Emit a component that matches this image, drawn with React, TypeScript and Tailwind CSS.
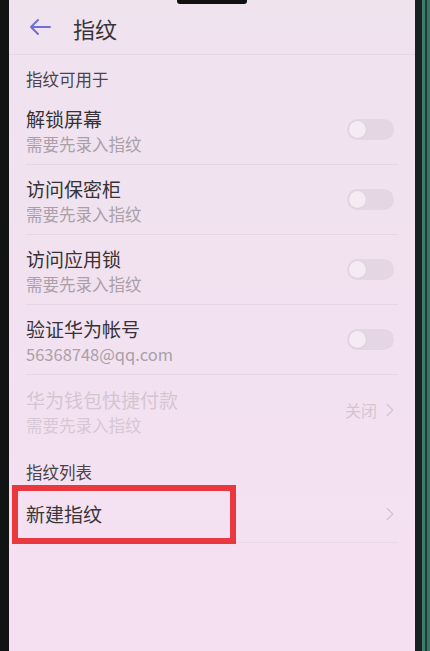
import { ChevronRight } from 'lucide-react';

const font = { fontFamily: '"Noto Sans CJK SC", "Noto Sans", sans-serif' };

function Toggle() {
  return (
    <div className="w-[47px] h-[21px] rounded-full bg-[#e4d6e3] flex items-center px-[2px]">
      <div className="w-[17px] h-[17px] rounded-full bg-[#f4ebf3] shadow-[0_0_2px_rgba(0,0,0,0.08)]" />
    </div>
  );
}

function ToggleRow({ title, sub, last }: { title: string; sub: string; last?: boolean }) {
  return (
    <div className={`h-[70px] mx-[17px] flex items-center justify-between ${last ? '' : 'border-b border-[#e6d7e4]'}`}>
      <div className="flex flex-col pt-[2px]">
        <span className="text-[19px] leading-[26px] text-[#363236]">{title}</span>
        <span className="text-[16.5px] leading-[24px] text-[#aaa0a8]">{sub}</span>
      </div>
      <div className="mr-[4px]">
        <Toggle />
      </div>
    </div>
  );
}

export default function App() {
  return (
    <div className="flex w-[430px] h-[651px] overflow-hidden bg-black" style={font}>
      {/* bezel left */}
      <div className="w-[9px] bg-[#121414]" />

      {/* screen */}
      <div className="relative flex-1 flex flex-col bg-gradient-to-b from-[#efe3ee] to-[#f5e0f2]">
        <div className="absolute top-0 left-[168px] w-[70px] h-[4px] rounded-b-[3px] bg-[#111]" />

        {/* header */}
        <div className="h-[55px] flex items-center border-b border-[#e4d8e3]">
          <svg width="22" height="18" viewBox="0 0 22 18" className="ml-[20px]" fill="none" stroke="#6e70d4" strokeWidth="2" strokeLinecap="round" strokeLinejoin="round">
            <path d="M21 9H2M9 2L2 9l7 7" />
          </svg>
          <span className="ml-[22px] text-[22px] text-[#38343a] pt-[2px]">指纹</span>
        </div>

        {/* section 1 */}
        <div className="h-[40px] pt-[14px] px-[17px] text-[16.5px] leading-[20px] text-[#4a444a]">指纹可用于</div>
        <ToggleRow title="解锁屏幕" sub="需要先录入指纹" />
        <ToggleRow title="访问保密柜" sub="需要先录入指纹" />
        <ToggleRow title="访问应用锁" sub="需要先录入指纹" />
        <ToggleRow title="验证华为帐号" sub="56368748@qq.com" />

        <div className="h-[70px] mx-[17px] flex items-center justify-between">
          <div className="flex flex-col pt-[4px]">
            <span className="text-[19px] leading-[26px] text-[#d3c6d1]">华为钱包快捷付款</span>
            <span className="text-[16.5px] leading-[24px] text-[#d6c8d4]">需要先录入指纹</span>
          </div>
          <div className="flex items-center gap-[2px] text-[16px] text-[#d3c6d1] -mr-[3px]">
            <span>关闭</span>
            <ChevronRight size={22} strokeWidth={1.4} />
          </div>
        </div>

        {/* section 2 */}
        <div className="h-[40px] pt-[17px] px-[17px] text-[16.5px] leading-[20px] text-[#4a444a]">指纹列表</div>
        <div className="relative h-[58px] mx-[17px] flex items-center justify-between border-b border-[#e8dae6]">
          <span className="text-[19px] text-[#3a363a] pt-[2px]">新建指纹</span>
          <ChevronRight size={22} strokeWidth={1.3} className="text-[#cfc3cd] -mr-[3px]" />
          <div className="absolute left-[-14px] top-0 w-[224px] h-[59px] border-[6px] border-[#e9393f]" />
        </div>
      </div>

      {/* bezel right */}
      <div className="flex w-[15px]">
        <div className="w-[7px] bg-[#162220]" />
        <div className="w-[3px] bg-[#3f7c6b]" />
        <div className="w-[2px] bg-[#1d3a33]" />
        <div className="w-[3px] bg-[#3a7463]" />
      </div>
    </div>
  );
}
